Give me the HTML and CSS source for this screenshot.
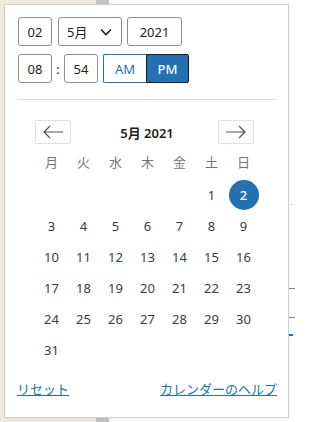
FILE: index.html
```html
<!DOCTYPE html>
<html lang="ja">
<head>
<meta charset="utf-8">
<link rel="stylesheet" href="styles.css">
</head>
<body>
<div class="backdrop">
  <div class="bd-beige"></div>
  <div class="bd-gray"></div>
  <div class="bd-white">
    <div class="bd-line bd-line-light"></div>
    <div class="bd-line bd-line-dark bd-l2"></div>
    <div class="bd-line bd-line-dark bd-l3"></div>
    <div class="bd-link"></div>
  </div>
</div>

<div class="popover">
  <div class="row">
    <div class="field f-day">02</div>
    <div class="field f-month"><span>5月</span>
      <svg class="chev" width="12" height="8" viewBox="0 0 12 8"><path d="M1 1.5l5 5 5-5" fill="none" stroke="#1e1e1e" stroke-width="1.6"/></svg>
    </div>
    <div class="field f-year">2021</div>
  </div>
  <div class="row row2">
    <div class="field f-day">08</div>
    <span class="colon">:</span>
    <div class="field f-day">54</div>
    <div class="ampm">
      <div class="am">AM</div>
      <div class="pm">PM</div>
    </div>
  </div>
  <div class="sep"></div>

  <div class="cal">
    <div class="nav">
      <div class="navbtn">
        <svg width="22" height="14" viewBox="0 0 22 14"><path d="M21 7H2M8 1L2 7l6 6" fill="none" stroke="#555" stroke-width="1.2"/></svg>
      </div>
      <div class="title">5月 2021</div>
      <div class="navbtn next">
        <svg width="22" height="14" viewBox="0 0 22 14"><path d="M1 7h19M14 1l6 6-6 6" fill="none" stroke="#555" stroke-width="1.2"/></svg>
      </div>
    </div>
    <div class="weekdays">
      <span>月</span><span>火</span><span>水</span><span>木</span><span>金</span><span>土</span><span>日</span>
    </div>
    <div class="days">
      <span></span><span></span><span></span><span></span><span></span><span>1</span><span class="sel"><b>2</b></span>
      <span>3</span><span>4</span><span>5</span><span>6</span><span>7</span><span>8</span><span>9</span>
      <span>10</span><span>11</span><span>12</span><span>13</span><span>14</span><span>15</span><span>16</span>
      <span>17</span><span>18</span><span>19</span><span>20</span><span>21</span><span>22</span><span>23</span>
      <span>24</span><span>25</span><span>26</span><span>27</span><span>28</span><span>29</span><span>30</span>
      <span>31</span>
    </div>
  </div>

  <div class="footer">
    <a href="#" class="link">リセット</a>
    <a href="#" class="link">カレンダーのヘルプ</a>
  </div>
</div>
</body>
</html>
```

FILE: styles.css
```css
html, body {
  margin: 0;
  padding: 0;
  width: 295px;
  height: 422px;
  overflow: hidden;
  font-family: "Noto Sans", "Noto Sans CJK JP", sans-serif;
  font-size: 13px;
  color: #1e1e1e;
}

.backdrop {
  display: flex;
  height: 422px;
}
.bd-beige { width: 96px; background: #f1ece0; }
.bd-gray { width: 13px; background: #c4c4c4; }
.bd-white {
  flex: 1;
  background: #fff;
  display: flex;
  flex-direction: column;
}
.bd-line { height: 1px; margin-left: 20px; }
.bd-line-light { background: #e2e2e2; margin-top: 204px; }
.bd-line-dark { background: #8a8a8a; }
.bd-l2 { margin-top: 83px; }
.bd-l3 { margin-top: 28px; }
.bd-link {
  margin-top: 16px;
  margin-left: 178px;
  width: 6px;
  height: 2px;
  background: #2271b1;
}

.popover {
  position: absolute;
  left: 4px;
  top: 4px;
  width: 285px;
  height: 414px;
  box-sizing: border-box;
  background: #fff;
  border: 1px solid #cfcfcf;
  box-shadow: 0 1px 4px rgba(0,0,0,0.06);
  padding: 12px 11px 0 13px;
}

.row {
  display: flex;
  align-items: center;
  height: 29px;
}
.row2 { margin-top: 8px; }

.field {
  height: 29px;
  box-sizing: border-box;
  border: 1px solid #8f8f8f;
  border-radius: 3px;
  display: flex;
  align-items: center;
  justify-content: center;
  font-size: 13px;
  color: #1e1e1e;
}
.f-day { width: 34px; }
.f-month {
  width: 64px;
  margin-left: 6px;
  justify-content: space-between;
  padding: 0 9px 0 8px;
}
.chev { display: block; margin-top: 1px; }
.f-year { width: 55px; margin-left: 5px; }

.colon {
  width: 12px;
  text-align: center;
  color: #1e1e1e;
}

.ampm {
  display: flex;
  margin-left: 5px;
  height: 29px;
}
.am, .pm {
  width: 43px;
  box-sizing: border-box;
  display: flex;
  align-items: center;
  justify-content: center;
  font-size: 13px;
}
.am {
  border: 1px solid #2271b1;
  border-right: none;
  color: #2271b1;
  border-radius: 2px 0 0 2px;
  background: #fff;
}
.pm {
  background: #2271b1;
  color: #fff;
  border: 1px solid #1e1e1e;
  border-radius: 0 2px 2px 0;
  font-weight: 500;
}

.sep {
  height: 1px;
  background: #dedede;
  margin-top: 16px;
  margin-left: -1px;
}

.cal {
  width: 224px;
  margin: 20px auto 0;
}

.nav {
  display: flex;
  align-items: center;
  justify-content: space-between;
  height: 24px;
  margin-left: -1px;
  margin-right: 6px;
}
.navbtn {
  width: 36px;
  height: 24px;
  box-sizing: border-box;
  border: 1px solid #e0e0e0;
  border-radius: 2px;
  display: flex;
  align-items: center;
  justify-content: center;
}
.title {
  font-weight: 600;
  font-size: 13px;
  color: #1e1e1e;
  padding-left: 6px;
}

.weekdays {
  display: grid;
  grid-template-columns: repeat(7, 32px);
  margin-top: 4px;
  height: 26px;
  align-items: center;
  color: #757575;
  font-size: 13px;
}
.weekdays span { text-align: center; }

.days {
  display: grid;
  grid-template-columns: repeat(7, 32px);
  grid-auto-rows: 31px;
  margin-top: 5px;
  color: #3c3c3c;
  font-size: 13px;
}
.days span {
  display: flex;
  align-items: center;
  justify-content: center;
}
.days .sel b {
  width: 30px;
  height: 30px;
  border-radius: 50%;
  background: #2271b1;
  color: #fff;
  font-weight: 500;
  display: flex;
  align-items: center;
  justify-content: center;
}

.footer {
  display: flex;
  justify-content: space-between;
  margin-top: 15px;
  margin-left: -1px;
  line-height: 18px;
}
.link {
  color: #2271b1;
  text-decoration: underline;
  font-size: 13px;
}
```
